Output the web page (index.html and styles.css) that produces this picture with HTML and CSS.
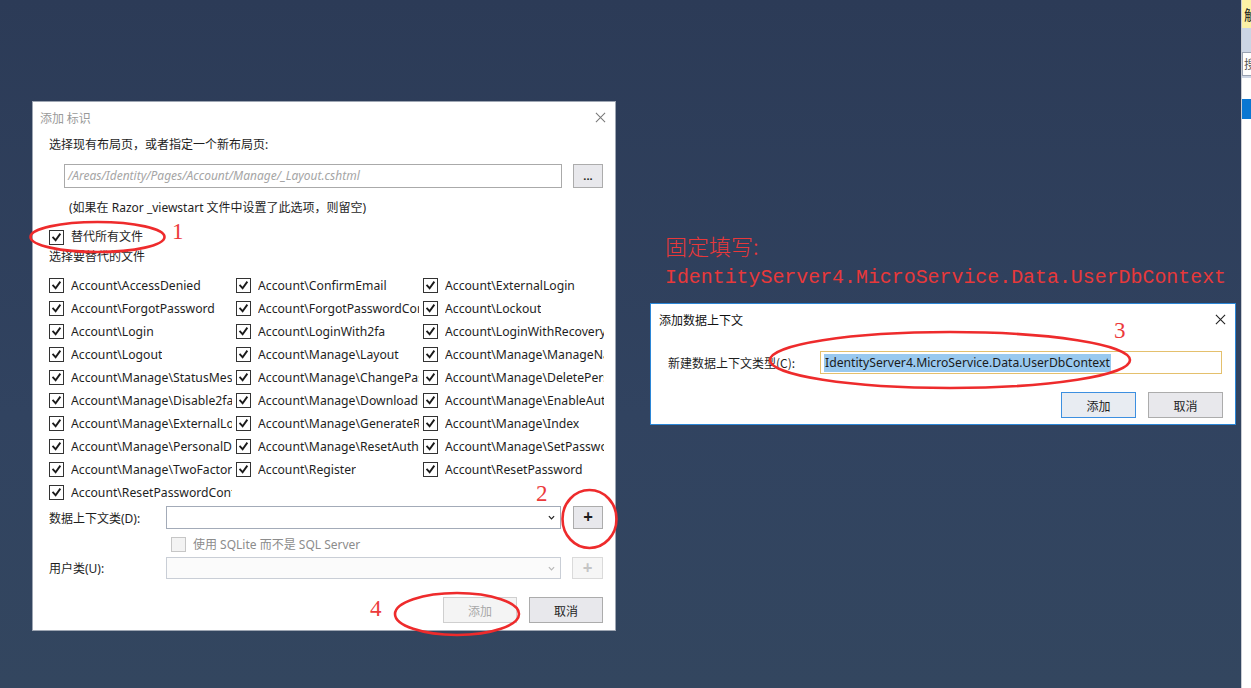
FILE: index.html
```html
<!DOCTYPE html>
<html lang="zh-CN">
<head>
<meta charset="utf-8">
<title>添加 标识</title>
<link rel="stylesheet" href="styles.css">
</head>
<body>
<div class="desktop">

  <div class="side-strip">
    <div class="strip-yellow">触</div>
    <div class="strip-grey"><div class="strip-box">搜</div></div>
    <div class="strip-gap"></div>
    <div class="strip-blue"></div>
  </div>

  <div class="note-red">
    <div class="note-cn">固定填写:</div>
    <div class="note-code">IdentityServer4.MicroService.Data.UserDbContext</div>
  </div>

  <div class="dlg dlg-main">
    <div class="titlebar">
      <span class="title dim">添加 标识</span>
      <svg class="close" viewBox="0 0 12 12"><path d="M1 1 L11 11 M11 1 L1 11"/></svg>
    </div>
    <div class="body">
      <div class="line first">选择现有布局页，或者指定一个新布局页:</div>
      <div class="layout-row">
        <div class="path-input">/Areas/Identity/Pages/Account/Manage/_Layout.cshtml</div>
        <div class="btn btn-dots">...</div>
      </div>
      <div class="line note">(如果在 Razor _viewstart 文件中设置了此选项，则留空)</div>
      <div class="line chk-all"><span class="cb"><svg viewBox="0 0 13 13"><path d="M3.2 6.6 L5.6 9.2 L9.8 3.4"/></svg></span><span>替代所有文件</span></div>
      <div class="line">选择要替代的文件</div>
      <div class="grid">
        <div class="item"><span class="cb"><svg viewBox="0 0 13 13"><path d="M3.2 6.6 L5.6 9.2 L9.8 3.4"/></svg></span><span class="txt">Account\AccessDenied</span></div>
        <div class="item"><span class="cb"><svg viewBox="0 0 13 13"><path d="M3.2 6.6 L5.6 9.2 L9.8 3.4"/></svg></span><span class="txt">Account\ConfirmEmail</span></div>
        <div class="item"><span class="cb"><svg viewBox="0 0 13 13"><path d="M3.2 6.6 L5.6 9.2 L9.8 3.4"/></svg></span><span class="txt">Account\ExternalLogin</span></div>
        <div class="item"><span class="cb"><svg viewBox="0 0 13 13"><path d="M3.2 6.6 L5.6 9.2 L9.8 3.4"/></svg></span><span class="txt">Account\ForgotPassword</span></div>
        <div class="item"><span class="cb"><svg viewBox="0 0 13 13"><path d="M3.2 6.6 L5.6 9.2 L9.8 3.4"/></svg></span><span class="txt">Account\ForgotPasswordConfirmation</span></div>
        <div class="item"><span class="cb"><svg viewBox="0 0 13 13"><path d="M3.2 6.6 L5.6 9.2 L9.8 3.4"/></svg></span><span class="txt">Account\Lockout</span></div>
        <div class="item"><span class="cb"><svg viewBox="0 0 13 13"><path d="M3.2 6.6 L5.6 9.2 L9.8 3.4"/></svg></span><span class="txt">Account\Login</span></div>
        <div class="item"><span class="cb"><svg viewBox="0 0 13 13"><path d="M3.2 6.6 L5.6 9.2 L9.8 3.4"/></svg></span><span class="txt">Account\LoginWith2fa</span></div>
        <div class="item"><span class="cb"><svg viewBox="0 0 13 13"><path d="M3.2 6.6 L5.6 9.2 L9.8 3.4"/></svg></span><span class="txt">Account\LoginWithRecoveryCode</span></div>
        <div class="item"><span class="cb"><svg viewBox="0 0 13 13"><path d="M3.2 6.6 L5.6 9.2 L9.8 3.4"/></svg></span><span class="txt">Account\Logout</span></div>
        <div class="item"><span class="cb"><svg viewBox="0 0 13 13"><path d="M3.2 6.6 L5.6 9.2 L9.8 3.4"/></svg></span><span class="txt">Account\Manage\Layout</span></div>
        <div class="item"><span class="cb"><svg viewBox="0 0 13 13"><path d="M3.2 6.6 L5.6 9.2 L9.8 3.4"/></svg></span><span class="txt">Account\Manage\ManageNav</span></div>
        <div class="item"><span class="cb"><svg viewBox="0 0 13 13"><path d="M3.2 6.6 L5.6 9.2 L9.8 3.4"/></svg></span><span class="txt">Account\Manage\StatusMessage</span></div>
        <div class="item"><span class="cb"><svg viewBox="0 0 13 13"><path d="M3.2 6.6 L5.6 9.2 L9.8 3.4"/></svg></span><span class="txt">Account\Manage\ChangePassword</span></div>
        <div class="item"><span class="cb"><svg viewBox="0 0 13 13"><path d="M3.2 6.6 L5.6 9.2 L9.8 3.4"/></svg></span><span class="txt">Account\Manage\DeletePersonalData</span></div>
        <div class="item"><span class="cb"><svg viewBox="0 0 13 13"><path d="M3.2 6.6 L5.6 9.2 L9.8 3.4"/></svg></span><span class="txt">Account\Manage\Disable2fa</span></div>
        <div class="item"><span class="cb"><svg viewBox="0 0 13 13"><path d="M3.2 6.6 L5.6 9.2 L9.8 3.4"/></svg></span><span class="txt">Account\Manage\DownloadPersonalData</span></div>
        <div class="item"><span class="cb"><svg viewBox="0 0 13 13"><path d="M3.2 6.6 L5.6 9.2 L9.8 3.4"/></svg></span><span class="txt">Account\Manage\EnableAuthenticator</span></div>
        <div class="item"><span class="cb"><svg viewBox="0 0 13 13"><path d="M3.2 6.6 L5.6 9.2 L9.8 3.4"/></svg></span><span class="txt">Account\Manage\ExternalLogins</span></div>
        <div class="item"><span class="cb"><svg viewBox="0 0 13 13"><path d="M3.2 6.6 L5.6 9.2 L9.8 3.4"/></svg></span><span class="txt">Account\Manage\GenerateRecoveryCodes</span></div>
        <div class="item"><span class="cb"><svg viewBox="0 0 13 13"><path d="M3.2 6.6 L5.6 9.2 L9.8 3.4"/></svg></span><span class="txt">Account\Manage\Index</span></div>
        <div class="item"><span class="cb"><svg viewBox="0 0 13 13"><path d="M3.2 6.6 L5.6 9.2 L9.8 3.4"/></svg></span><span class="txt">Account\Manage\PersonalData</span></div>
        <div class="item"><span class="cb"><svg viewBox="0 0 13 13"><path d="M3.2 6.6 L5.6 9.2 L9.8 3.4"/></svg></span><span class="txt">Account\Manage\ResetAuthenticator</span></div>
        <div class="item"><span class="cb"><svg viewBox="0 0 13 13"><path d="M3.2 6.6 L5.6 9.2 L9.8 3.4"/></svg></span><span class="txt">Account\Manage\SetPassword</span></div>
        <div class="item"><span class="cb"><svg viewBox="0 0 13 13"><path d="M3.2 6.6 L5.6 9.2 L9.8 3.4"/></svg></span><span class="txt">Account\Manage\TwoFactorAuthentication</span></div>
        <div class="item"><span class="cb"><svg viewBox="0 0 13 13"><path d="M3.2 6.6 L5.6 9.2 L9.8 3.4"/></svg></span><span class="txt">Account\Register</span></div>
        <div class="item"><span class="cb"><svg viewBox="0 0 13 13"><path d="M3.2 6.6 L5.6 9.2 L9.8 3.4"/></svg></span><span class="txt">Account\ResetPassword</span></div>
        <div class="item"><span class="cb"><svg viewBox="0 0 13 13"><path d="M3.2 6.6 L5.6 9.2 L9.8 3.4"/></svg></span><span class="txt">Account\ResetPasswordConfirmation</span></div>
      </div>
      <div class="field-row ctx-row">
        <span class="lbl">数据上下文类(D):</span>
        <div class="combo"><svg class="chev" viewBox="0 0 8 5"><path d="M1 1 L4 4 L7 1"/></svg></div>
        <div class="btn btn-plus">+</div>
      </div>
      <div class="sqlite-row"><span class="cb cb-dis"></span><span>使用 SQLite 而不是 SQL Server</span></div>
      <div class="field-row user-row">
        <span class="lbl">用户类(U):</span>
        <div class="combo combo-dis"><svg class="chev" viewBox="0 0 8 5"><path d="M1 1 L4 4 L7 1"/></svg></div>
        <div class="btn btn-plus btn-plus-dis">+</div>
      </div>
      <div class="actions">
        <div class="btn btn-act btn-dis">添加</div>
        <div class="btn btn-act">取消</div>
      </div>
    </div>
  </div>

  <div class="dlg dlg-ctx">
    <div class="titlebar">
      <span class="title">添加数据上下文</span>
      <svg class="close close-dark" viewBox="0 0 12 12"><path d="M1 1 L11 11 M11 1 L1 11"/></svg>
    </div>
    <div class="ctx-body">
      <div class="ctx-field">
        <span class="ctx-lbl">新建数据上下文类型(C):</span>
        <div class="ctx-input"><span class="sel">IdentityServer4.MicroService.Data.UserDbContext</span></div>
      </div>
      <div class="ctx-actions">
        <div class="btn btn-act btn-default">添加</div>
        <div class="btn btn-act">取消</div>
      </div>
    </div>
  </div>

  <svg class="marks" viewBox="0 0 1251 688">
    <ellipse cx="97.5" cy="237" rx="67" ry="15"/>
    <ellipse cx="589.5" cy="519" rx="27" ry="29"/>
    <ellipse cx="950" cy="360" rx="180" ry="28"/>
    <ellipse cx="457" cy="614" rx="62" ry="21"/>
  </svg>
  <div class="num n1">1</div>
  <div class="num n2">2</div>
  <div class="num n3">3</div>
  <div class="num n4">4</div>
</div>
</body>
</html>
```
FILE: styles.css
```css
* { box-sizing: border-box; }
html, body { margin: 0; padding: 0; }
body {
  width: 1251px;
  height: 688px;
  overflow: hidden;
  font-family: "Noto Sans", "Noto Sans CJK SC", sans-serif;
  font-size: 12px;
  color: #1e1e1e;
}
.desktop {
  position: relative;
  width: 1251px;
  height: 688px;
  background: linear-gradient(180deg, #2c3b57 0%, #314360 60%, #33465f 100%);
  overflow: hidden;
}

/* right-edge strip */
.side-strip {
  position: absolute;
  left: 1241px;
  top: 0;
  width: 10px;
  height: 688px;
  background: #ffffff;
  border-left: 1px solid #c9ccd3;
  display: flex;
  flex-direction: column;
  overflow: hidden;
}
.strip-yellow {
  height: 28px;
  background: #fcf1a6;
  font-size: 14px;
  line-height: 28px;
  padding-left: 2px;
  white-space: nowrap;
  font-family: "Noto Sans CJK SC", sans-serif;
}
.strip-grey {
  height: 50px;
  background: #ccd5e4;
  padding-top: 24px;
}
.strip-box {
  height: 24px;
  background: #fff;
  border: 1px solid #9aa3b2;
  border-right: 0;
  font-size: 12px;
  line-height: 22px;
  padding-left: 1px;
  color: #555;
  white-space: nowrap;
  font-family: "Noto Sans CJK SC", sans-serif;
}
.strip-gap { height: 21px; }
.strip-blue { height: 20px; background: #0a77d2; }

/* red note */
.note-red {
  position: absolute;
  left: 665px;
  top: 231px;
  color: #e8383a;
}
.note-cn {
  font-family: "Noto Sans CJK SC", sans-serif;
  font-size: 22px;
  line-height: 28px;
  font-weight: 300;
}
.note-code {
  font-family: "Liberation Mono", monospace;
  font-size: 19.9px;
  line-height: 26px;
  margin-top: 6px;
  white-space: nowrap;
}

/* dialogs */
.dlg {
  position: absolute;
  background: #ffffff;
}
.dlg-main {
  left: 32px;
  top: 101px;
  width: 584px;
  height: 530px;
  border: 1px solid #9ea6b3;
}
.titlebar {
  height: 30px;
  display: flex;
  align-items: center;
  justify-content: space-between;
  padding: 0 9px 0 7px;
}
.title { font-family: "Noto Sans CJK SC", sans-serif; font-size: 12px; color: #111; }
.title.dim { color: #9a9a9a; }
.close { width: 11px; height: 11px; }
.close path { stroke: #777; stroke-width: 1.1; fill: none; }
.close-dark path { stroke: #222; stroke-width: 1.2; }

.body {
  padding: 0 12px 0 16px;
  display: flex;
  flex-direction: column;
}
.line {
  height: 20px;
  line-height: 20px;
  white-space: nowrap;
}
.first { margin-top: 3px; }
.layout-row {
  margin-top: 9px;
  margin-left: 15px;
  display: flex;
  gap: 11px;
  height: 24px;
}
.path-input {
  width: 498px;
  height: 24px;
  border: 1px solid #aaaaaa;
  font-style: italic;
  color: #a5a5a5;
  line-height: 22px;
  padding-left: 3px;
  white-space: nowrap;
  overflow: hidden;
}
.btn {
  display: flex;
  align-items: center;
  justify-content: center;
  background: #e8e8ec;
  border: 1px solid #acacac;
  color: #1e1e1e;
  font-family: "Noto Sans CJK SC", sans-serif;
}
.btn-dots { width: 30px; height: 24px; font-size: 11px; font-family: "Noto Sans", sans-serif; font-weight: bold; padding-bottom: 2px; }
.note { margin-top: 10px; margin-left: 20px; }
.chk-all { margin-top: 9px; display: flex; align-items: center; gap: 7px; }

.cb {
  flex: none;
  width: 15px;
  height: 15px;
  border: 1px solid #333333;
  background: #fff;
  display: inline-flex;
  align-items: center;
  justify-content: center;
}
.cb svg { width: 13px; height: 13px; }
.cb path { fill: none; stroke: #1b1b1b; stroke-width: 1.9; stroke-linecap: square; }

.grid {
  margin-top: 7px;
  display: grid;
  grid-template-columns: 183px 183px 181px;
  grid-auto-rows: 23px;
  column-gap: 4px;
  font-size: 12.2px;
}
.item {
  display: flex;
  align-items: center;
  gap: 7px;
  overflow: hidden;
  white-space: nowrap;
}
.item .txt { overflow: hidden; }

.field-row {
  display: flex;
  align-items: center;
}
.ctx-row { margin-top: 2px; height: 23px; }
.lbl { width: 117px; flex: none; white-space: nowrap; }
.combo {
  width: 395px;
  height: 23px;
  border: 1px solid #a3abb8;
  background: #fff;
  display: flex;
  align-items: center;
  justify-content: flex-end;
  padding-right: 5px;
}
.chev { width: 7px; height: 5px; }
.chev path { fill: none; stroke: #222; stroke-width: 1.4; }
.combo-dis { border-color: #c9ced6; background: #fbfbfb; }
.combo-dis .chev path { stroke: #b8b8b8; }
.btn-plus {
  margin-left: 12px;
  width: 30px;
  height: 23px;
  font-family: "Noto Sans", sans-serif;
  font-size: 17px;
  font-weight: bold;
  line-height: 1;
  padding-bottom: 2px;
}
.btn-plus-dis {
  background: #f6f6f6;
  border-color: #dadada;
  color: #c4c4c4;
  height: 22px;
  margin-left: 11px;
  width: 31px;
}
.sqlite-row {
  margin-top: 5px;
  margin-left: 122px;
  height: 20px;
  display: flex;
  align-items: center;
  gap: 7px;
  color: #8c8c8c;
  white-space: nowrap;
}
.cb-dis { width: 15px; height: 15px; border-color: #c6c6c6; background: #f3f3f3; }
.user-row { margin-top: 3px; height: 22px; }
.user-row .combo { height: 22px; }
.actions {
  margin-top: 18px;
  display: flex;
  justify-content: flex-end;
  gap: 12px;
}
.btn-act { width: 74px; height: 26px; font-size: 12px; }
.btn-dis { background: #f4f4f4; border-color: #cfcfcf; color: #a8a8a8; }

/* context dialog */
.dlg-ctx {
  left: 650px;
  top: 303px;
  width: 586px;
  height: 122px;
  border: 1px solid #2b86d6;
}
.dlg-ctx .titlebar { height: 31px; padding: 0 9px 0 8px; }
.ctx-body { padding: 0 12px 0 17px; }
.ctx-field {
  margin-top: 16px;
  display: flex;
  align-items: center;
  height: 23px;
}
.ctx-lbl { width: 152px; flex: none; white-space: nowrap; font-family: "Noto Sans CJK SC", sans-serif; }
.ctx-input {
  width: 402px;
  height: 23px;
  border: 1px solid #e4c06d;
  padding: 2px 3px;
  display: flex;
  align-items: center;
  white-space: nowrap;
  font-size: 12.2px;
}
.sel { background: #99c9ef; color: #1a1a1a; line-height: 18px; padding: 0 1px; }
.ctx-actions {
  margin-top: 18px;
  display: flex;
  justify-content: flex-end;
  gap: 12px;
}
.ctx-actions .btn-act { width: 75px; }
.btn-default { border-color: #3c8fe0; background: #e8ecf2; }

/* annotations */
.marks {
  position: absolute;
  left: 0;
  top: 0;
  width: 1251px;
  height: 688px;
  pointer-events: none;
}
.marks ellipse { fill: none; stroke: #ee2b2c; stroke-width: 2.6; }
.num {
  position: absolute;
  font-family: "Liberation Serif", serif;
  font-size: 23px;
  line-height: 24px;
  color: #ec3a3b;
}
.n1 { left: 172px; top: 220px; }
.n2 { left: 536px; top: 482px; }
.n3 { left: 1114px; top: 319px; }
.n4 { left: 370px; top: 597px; }
```
